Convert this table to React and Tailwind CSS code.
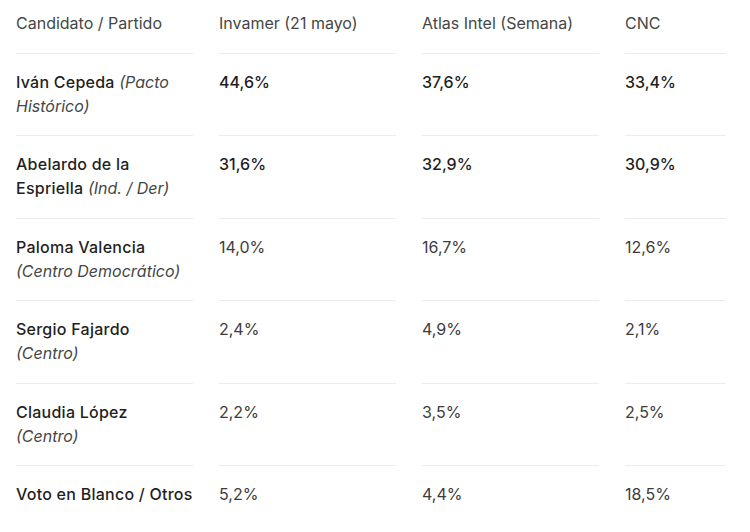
import React from "react";

const rows = [
  { lines: [[["Iván Cepeda", "n"], [" (Pacto", "p"]], [["Histórico)", "p"]]], vals: ["44,6%", "37,6%", "33,4%"], bold: true },
  { lines: [[["Abelardo de la", "n"]], [["Espriella", "n"], [" (Ind. / Der)", "p"]]], vals: ["31,6%", "32,9%", "30,9%"], bold: true },
  { lines: [[["Paloma Valencia", "n"]], [["(Centro Democrático)", "p"]]], vals: ["14,0%", "16,7%", "12,6%"] },
  { lines: [[["Sergio Fajardo", "n"]], [["(Centro)", "p"]]], vals: ["2,4%", "4,9%", "2,1%"] },
  { lines: [[["Claudia López", "n"]], [["(Centro)", "p"]]], vals: ["2,2%", "3,5%", "2,5%"] },
  { lines: [[["Voto en Blanco / Otros", "n"]]], vals: ["5,2%", "4,4%", "18,5%"] },
];

const headers = ["Candidato / Partido", "Invamer (21 mayo)", "Atlas Intel (Semana)", "CNC"];

export default function App() {
  return (
    <div
      className="w-[750px] h-[532px] bg-white overflow-hidden pl-4 text-[16px] leading-6 text-[#1f1f1f]"
      style={{ fontFamily: "Inter, 'Noto Sans', sans-serif" }}
    >
      <div className="grid grid-cols-[177px_177px_177px_101px] gap-x-[26px]">
        {headers.map((h) => (
          <div key={h} className="pt-[11px] pb-[17.5px] border-b border-[#ececec] text-[#444746] whitespace-nowrap">
            {h}
          </div>
        ))}
        {rows.map((r, i) => {
          const border = i < rows.length - 1 ? "border-b border-[#ececec]" : "";
          return (
            <React.Fragment key={i}>
              <div className={`pt-4 pb-[17.5px] ${border}`}>
                {r.lines.map((line, k) => (
                  <div key={k} className="whitespace-nowrap">
                    {line.map(([t, kind], m) =>
                      kind === "n" ? (
                        <span key={m} className="font-medium tracking-[0.25px] text-[#1f1f1f]">{t}</span>
                      ) : (
                        <span key={m} className="italic text-[#444746]">{t}</span>
                      )
                    )}
                  </div>
                ))}
              </div>
              {r.vals.map((v, j) => (
                <div
                  key={j}
                  className={`pt-4 pb-[17.5px] ${border} ${r.bold ? "font-medium text-[#1f1f1f]" : "text-[#3c3c3c]"}`}
                >
                  {v}
                </div>
              ))}
            </React.Fragment>
          );
        })}
      </div>
    </div>
  );
}
